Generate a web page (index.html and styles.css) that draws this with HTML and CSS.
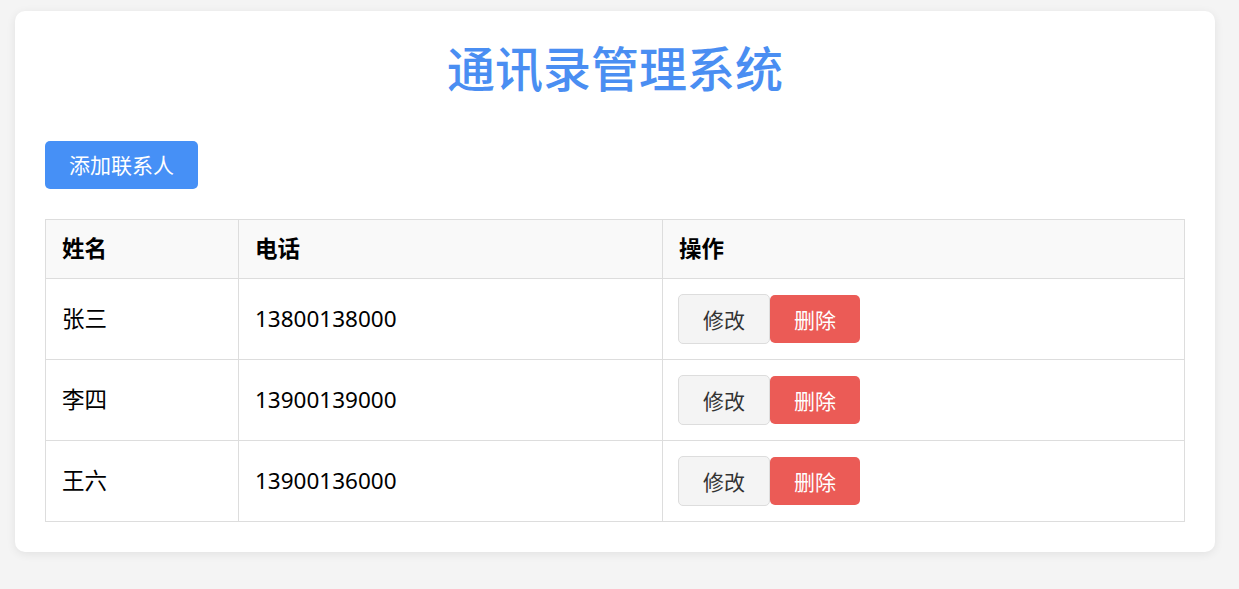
FILE: index.html
```html
<!DOCTYPE html>
<html lang="zh-CN">
<head>
  <meta charset="UTF-8" />
  <meta name="viewport" content="width=device-width, initial-scale=1.0" />
  <title>通讯录管理系统</title>
  <link rel="stylesheet" href="styles.css">
</head>
<body>
  <div class="container">
    <h1>通讯录管理系统</h1>
    <button class="add" onclick="addRow()">添加联系人</button>
    <table id="contactTable">
      <thead>
        <tr><th class="col-name">姓名</th><th class="col-phone">电话</th><th>操作</th></tr>
      </thead>
      <tbody id="tableBody">
        <tr>
          <td>张三</td>
          <td>13800138000</td>
          <td class="ops"><div class="actions"><button class="edit">修改</button><button class="delete">删除</button></div></td>
        </tr>
        <tr>
          <td>李四</td>
          <td>13900139000</td>
          <td class="ops"><div class="actions"><button class="edit">修改</button><button class="delete">删除</button></div></td>
        </tr>
        <tr>
          <td>王六</td>
          <td>13900136000</td>
          <td class="ops"><div class="actions"><button class="edit">修改</button><button class="delete">删除</button></div></td>
        </tr>
      </tbody>
    </table>
  </div>
</body>
</html>
```

FILE: styles.css
```css
body {
  margin: 0;
  padding: 11px 15px 37px;
  background: #f4f4f4;
  font-family: "Noto Sans", "Noto Sans CJK SC", sans-serif;
}
.container {
  width: 1200px;
  box-sizing: border-box;
  background: #fff;
  border-radius: 10px;
  box-shadow: 0 2px 10px rgba(0,0,0,0.08);
  padding: 26px 30px 30px;
}
h1 {
  margin: 0 0 40px;
  text-align: center;
  font-size: 48px;
  font-weight: 500;
  line-height: 64px;
  color: #4a8ef2;
}
button {
  font-family: inherit;
  cursor: pointer;
}
.add {
  display: block;
  height: 48px;
  width: 153px;
  padding: 0;
  font-size: 21px;
  line-height: 48px;
  color: #fff;
  background: #4690f6;
  border: none;
  border-radius: 5px;
  margin-bottom: 30px;
}
table {
  width: 100%;
  border-collapse: collapse;
}
th, td {
  border: 1px solid #ddd;
  padding: 15px 16px;
  text-align: left;
  font-size: 22.5px;
  color: #000;
}
th {
  background: #f9f9f9;
  font-weight: bold;
  line-height: 28px;
}
td {
  line-height: 48px;
}
td.ops {
  padding-left: 15px;
}
.col-name { width: 160px; }
.col-phone { width: 391px; }
.actions {
  display: flex;
  align-items: center;
}
.actions button {
  font-size: 21px;
  border-radius: 5px;
}
.edit {
  height: 50px;
  width: 92px;
  background: #f4f4f4;
  border: 1px solid #ddd;
  color: #333;
}
.delete {
  height: 48px;
  width: 90px;
  background: #eb5b56;
  border: none;
  color: #fff;
}
```
